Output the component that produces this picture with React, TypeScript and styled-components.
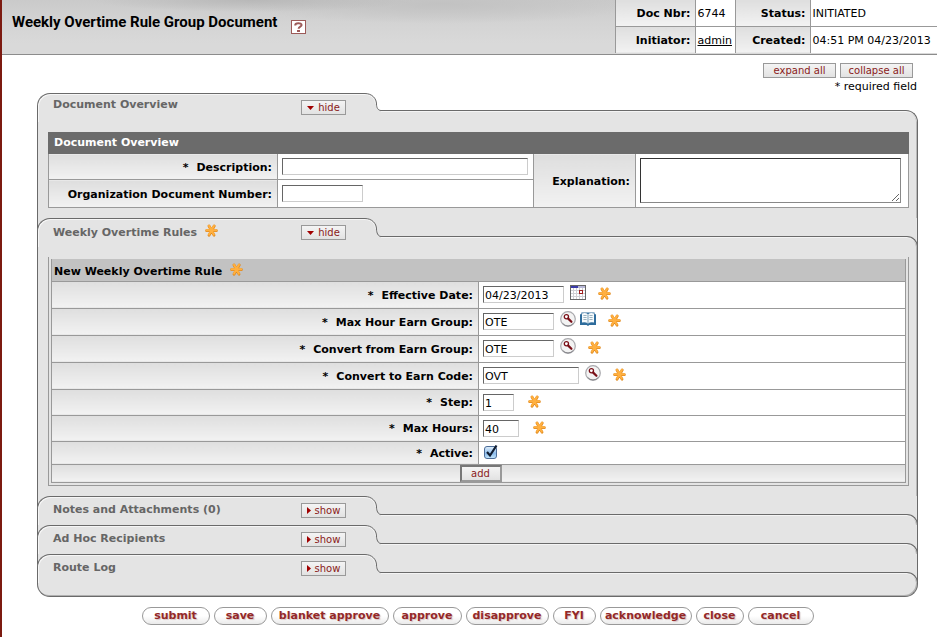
import React from "react";
import styled, { createGlobalStyle, css } from "styled-components";

const line = "#999";
const edge = "#6a6a6a";
const panel = "#e4e4e4";
const wine = "#8a1a1a";

const Global = createGlobalStyle`
  * { box-sizing: border-box; }
  body { margin: 0; background: #fff; color: #000; font: 11px/14px "DejaVu Sans", Verdana, sans-serif; }
  button, input, textarea { font: inherit; color: inherit; }
`;

const Page = styled.div`
  min-height: 100vh;
  border-left: 2px solid #7c1a10;
`;

const Header = styled.header`
  display: flex;
  justify-content: space-between;
  border-bottom: 1px solid #8c8c8c;
  background:
    radial-gradient(ellipse 160px 12px at 250px 0, #b8b8b8, transparent),
    radial-gradient(ellipse 200px 20px at 440px 4px, #c2c2c2, transparent),
    linear-gradient(#cacaca, #d3d3d3 40%, #d9d9d9 80%);
`;

const TitleBar = styled.div`
  display: flex;
  align-items: center;
  gap: 14px;
  padding: 0 0 10px 10px;
`;

const Title = styled.h1`
  margin: 0;
  font: bold 15px/20px "Arial Narrow", Roboto, sans-serif;
  white-space: nowrap;
`;

const HelpButton = styled.button`
  width: 15px;
  height: 14px;
  margin-top: 10px;
  padding: 0;
  border: 1px solid #9c5a58;
  background: #fff;
  svg { display: block; margin: 0 auto; }
`;

const labelFill = "linear-gradient(#dedede, #f2f2f2)";

const InfoTable = styled.table`
  border-collapse: collapse;
  background: #fff;
  margin-bottom: 1px;
  th, td { height: 27px; padding: 2px 2px 0; border-left: 1px solid ${line}; white-space: nowrap; }
  tr:first-child > * { height: 26px; }
  tr:last-child > * { border-top: 1px solid ${line}; }
  th { text-align: right; padding-right: 4px; background: ${labelFill}; }
  td:last-child { padding-right: 0; }
  a { color: #000; }
`;

const Tools = styled.div`
  display: flex;
  flex-direction: column;
  align-items: flex-end;
  margin: 8px 20px 0 0;
`;

const ToolRow = styled.div`
  display: flex;
  gap: 4px;
  margin-right: 4px;
`;

const SmallButton = styled.button<{ $w: number }>`
  display: flex;
  align-items: center;
  justify-content: center;
  gap: 4px;
  width: ${(p) => p.$w}px;
  height: 15px;
  padding: 0;
  border: 1px solid ${line};
  background: linear-gradient(#f4f4f4, #e2e2e2);
  color: ${wine};
  font-size: 10px;
  line-height: 13px;
`;

const Required = styled.div`
  margin-top: 3px;
  line-height: 12px;
`;

const Panels = styled.main`
  margin: 0 19px 0 35px;
`;

const Head = styled.div<{ $first?: boolean }>`
  display: grid;
  grid-template-columns: 328px 16px 1fr;
  ${(p) => !p.$first && css`
    background: ${panel};
    box-shadow: inset 1px 0 ${edge}, inset -1px 0 ${edge};
  `}
`;

const Tab = styled.div<{ $raised?: boolean }>`
  display: flex;
  align-items: flex-start;
  min-height: 29px;
  padding: ${(p) => (p.$raised ? "3px 0 0 15px" : "6px 0 0 15px")};
  border-top: 1px solid ${edge};
  border-left: 1px solid ${edge};
  border-top-left-radius: 13px;
  background: ${panel};
  box-shadow: inset 1px 1px #f6f6f6;
`;

const TabTitle = styled.h2`
  display: flex;
  align-items: center;
  gap: 8px;
  width: 248px;
  height: 15px;
  margin: 0;
  font: inherit;
  font-weight: bold;
  color: #666;
  svg { margin-bottom: 4px; }
`;

const TabAction = styled.div<{ $raised?: boolean }>`
  padding-top: ${(p) => (p.$raised ? "3px" : "0")};
`;

const Curve = styled.div`
  display: flex;
  flex-direction: column;
  svg { display: block; }
  &::after { content: ""; flex: 1; background: ${panel}; }
`;

const Shelf = styled.div<{ $drop: number }>`
  margin-top: ${(p) => p.$drop}px;
  border-top: 1px solid ${edge};
  border-right: 1px solid ${edge};
  border-top-right-radius: 13px;
  background: ${panel};
  box-shadow: inset 0 1px #f4f4f4, inset -1px 0 #b8b8b8;
`;

const Body = styled.div`
  padding: 10px 8px 10px 10px;
  border: solid ${edge};
  border-width: 0 1px;
  background: ${panel};
  box-shadow: inset -1px 0 #b8b8b8;
`;

const Foot = styled.div`
  height: 14px;
  border: 1px solid ${edge};
  border-top: 0;
  border-radius: 0 0 13px 13px;
  background: ${panel};
  box-shadow: inset -1px -1px #b0b0b0;
`;

const Grid = styled.table`
  width: 100%;
  border-collapse: collapse;
  table-layout: fixed;
  background: #fff;
  th, td { border: 1px solid ${line}; padding: 0 4px; text-align: left; }
`;

const Label = styled.th`
  && { text-align: right; padding: 2px 5px 0 0; background: ${labelFill}; }
`;

const DarkRow = styled.tr`
  && th { height: 21px; padding: 0 5px; background: #6b6b6b; border-color: #6b6b6b; color: #fff; }
`;

const SizedRow = styled.tr<{ $h: number }>`
  height: ${(p) => p.$h}px;
`;

const GrayRow = styled.tr`
  && th { height: 22px; padding: 0 2px; background: #c2c2c2; border-top: 0; }
`;

const Heading = styled.span`
  display: flex;
  align-items: center;
  gap: 8px;
  height: 18px;
  padding-top: 4px;
  svg { margin-bottom: 4px; }
`;

const RuleFrame = styled.div`
  padding: 2px;
  border: solid ${line};
  border-width: 0 1px 1px;
`;

const AddCell = styled.td`
  && { height: 18px; padding: 0 0 0 4px; background: ${labelFill}; }
`;

const AddButton = styled(SmallButton)`
  height: 17px;
  margin: 0 auto;
  border: 2px solid;
  border-color: #777 #999 #999 #777;
`;

const Star = styled.span`
  font-weight: bold;
  margin-right: 8px;
`;

const TextBox = styled.input<{ $w: number }>`
  display: block;
  width: ${(p) => p.$w}px;
  height: 17px;
  padding: 2px 1px 0;
  border: 1px solid;
  border-color: #666 #ccc #ccc #666;
  border-radius: 0;
  background: #fff;
`;

const Area = styled.textarea`
  display: block;
  width: 261px;
  max-width: 100%;
  height: 45px;
  border: 1px solid;
  border-color: #333 #888 #888 #333;
  border-radius: 0;
  background: #fff;
`;

const Field = styled.div`
  display: flex;
  align-items: center;
`;

const IconButton = styled.button<{ $gap: number }>`
  width: 16px;
  height: 16px;
  margin: 0 0 5px ${(p) => p.$gap}px;
  padding: 0;
  border: 0;
  background: none;
  svg { display: block; }
`;

const Mark = styled.span<{ $gap: number }>`
  display: flex;
  margin: 0 0 2px ${(p) => p.$gap}px;
`;

const CheckWrap = styled.span`
  position: relative;
  display: block;
  width: 13px;
  height: 13px;
  margin-left: 1px;
  svg { position: absolute; left: 0; bottom: 0; pointer-events: none; opacity: 0; }
  input:checked + svg { opacity: 1; }
`;

const Check = styled.input`
  appearance: none;
  display: block;
  width: 13px;
  height: 13px;
  margin: 0;
  border: 1px solid #4c6c98;
  border-radius: 3px;
  background: linear-gradient(#dcecfa, #8cbcec 60%, #c0e4fc);
`;

const Actions = styled.div`
  display: flex;
  flex-wrap: wrap;
  justify-content: center;
  gap: 4px;
  padding: 10px 0;
`;

const Pill = styled.button<{ $w: number }>`
  width: ${(p) => p.$w}px;
  height: 18px;
  padding: 0;
  border: 1px solid ${line};
  border-radius: 9px;
  background: linear-gradient(#fff 50%, #eaeaea);
  color: #942828;
  font-weight: bold;
  line-height: 15px;
  text-shadow: 1px 1px 1px #d8c4c4;
  white-space: nowrap;
`;

const Asterisk = () => (
  <svg width="13" height="13" viewBox="0 0 13 13" aria-hidden="true">
    <path d="M1.6 6.7H11.4M4 2L9 11.2M9.2 2L4 11.2" stroke="#e08a20" strokeWidth="2.8" strokeLinecap="round" />
    <path d="M1.6 6.3H11.2M4 1.8L8.8 10.6M9 1.8L4.1 10.6" stroke="#ffb040" strokeWidth="2" strokeLinecap="round" />
  </svg>
);

const Lens = () => (
  <svg width="16" height="16" viewBox="0 0 16 16" aria-hidden="true">
    <circle cx="8" cy="8" r="7.3" fill="#f3f3f3" stroke="#a9a9ad" strokeWidth="1.2" />
    <path d="M2.6 12.4A7 7 0 0 0 13.4 12.4" fill="none" stroke="#85858a" strokeWidth="1" />
    <circle cx="6.4" cy="5.8" r="2.1" fill="#fff" stroke="#7a1018" strokeWidth="1.3" />
    <path d="M8.2 7.6L11.4 10.8" stroke="#7a1018" strokeWidth="2.2" strokeLinecap="round" />
  </svg>
);

const Book = () => (
  <svg width="16" height="16" viewBox="0 0 16 16" aria-hidden="true">
    <path d="M0 3.2H1.4V1.6H14.6V3.2H16V14H9.4L8 15L6.6 14H0Z" fill="#2e6c9c" />
    <path d="M2 2.4Q5.6 1.2 8 3.2Q10.4 1.2 14 2.4V11.4Q10.4 10.6 8 12.4Q5.6 10.6 2 11.4Z" fill="#f6fafc" />
    <path d="M8 3.2V12.4" stroke="#7aa0b8" />
    <path d="M3.4 4.5H6.6M3.4 6.5H6.6M3.4 8.5H6.6M9.4 4.5H12.6M9.4 6.5H12.6M9.4 8.5H12.6" stroke="#9cb4c0" />
  </svg>
);

const Calendar = () => (
  <svg width="16" height="15" viewBox="0 0 16 15" shapeRendering="crispEdges" aria-hidden="true">
    <rect x="0" y="0" width="16" height="15" fill="#666" />
    <rect x="1" y="1" width="14" height="13" fill="#fff" />
    <path d="M1 5.5H15M1 8.5H15M1 11.5H15M3.5 3V14M6.5 3V14M9.5 3V14M12.5 3V14" stroke="#d0d0d4" />
    <rect x="1" y="1" width="7" height="2" fill="#3a3aa8" />
    <rect x="8" y="1" width="7" height="2" fill="#b8b8d8" />
    <rect x="9.5" y="5.5" width="3" height="3" fill="#fff" stroke="#a02020" />
  </svg>
);

const Down = () => (
  <svg width="7" height="4" viewBox="0 0 7 4" aria-hidden="true"><path d="M0 0H7L3.5 4Z" fill="#a00000" /></svg>
);

const Right = () => (
  <svg width="4" height="7" viewBox="0 0 4 7" aria-hidden="true"><path d="M0 0V7L4 3.5Z" fill="#a00000" /></svg>
);

const CurveSvg = ({ drop }: { drop: number }) => {
  const end = drop + 0.5;
  const path = `M0 0.5C7 0.5 11.5 5.5 11.5 11C11.5 14.5 13 ${end} 16 ${end}`;
  return (
    <svg width="16" height={drop + 1} viewBox={`0 0 16 ${drop + 1}`} aria-hidden="true">
      <path d={`${path}V${drop + 1}H0Z`} fill={panel} />
      <path d="M0 1.5C6 1.5 10.5 6 10.5 11" fill="none" stroke="#f6f6f6" />
      <path d={path} fill="none" stroke={edge} />
    </svg>
  );
};

type PanelProps = { title: string; open?: boolean; first?: boolean; marked?: boolean; children?: React.ReactNode };

const Panel = ({ title, open, first, marked, children }: PanelProps) => {
  const drop = first ? 17 : 18;
  return (
    <section>
      <Head $first={first}>
        <Tab $raised={first}>
          <TabTitle>{title}{marked && <Asterisk />}</TabTitle>
          <TabAction $raised={first}>
            <SmallButton $w={45} type="button">{open ? <Down /> : <Right />}{open ? "hide" : "show"}</SmallButton>
          </TabAction>
        </Tab>
        <Curve><CurveSvg drop={drop} /></Curve>
        <Shelf $drop={drop} />
      </Head>
      {children && <Body>{children}</Body>}
    </section>
  );
};

type Rule = { label: string; id: string; w: number; value: string; h: number; icons: ("calendar" | "lens" | "book")[]; gap: number };

const rules: Rule[] = [
  { label: "Effective Date:", id: "date", w: 81, value: "04/23/2013", h: 27, icons: ["calendar"], gap: 12 },
  { label: "Max Hour Earn Group:", id: "maxGroup", w: 71, value: "OTE", h: 27, icons: ["lens", "book"], gap: 12 },
  { label: "Convert from Earn Group:", id: "fromGroup", w: 71, value: "OTE", h: 27, icons: ["lens"], gap: 12 },
  { label: "Convert to Earn Code:", id: "toCode", w: 96, value: "OVT", h: 27, icons: ["lens"], gap: 12 },
  { label: "Step:", id: "step", w: 31, value: "1", h: 26, icons: [], gap: 14 },
  { label: "Max Hours:", id: "maxHours", w: 36, value: "40", h: 26, icons: [], gap: 14 },
];

const glyphs = { calendar: <Calendar />, lens: <Lens />, book: <Book /> };
const glyphNames = { calendar: "Pick date", lens: "Search", book: "Direct inquiry" };

const actions: [string, number][] = [
  ["submit", 68], ["save", 53], ["blanket approve", 118], ["approve", 69], ["disapprove", 83],
  ["FYI", 43], ["acknowledge", 92], ["close", 48], ["cancel", 66],
];

export default function App() {
  return (
    <Page>
      <Global />
      <Header>
        <TitleBar>
          <Title>Weekly Overtime Rule Group Document</Title>
          <HelpButton type="button" aria-label="Help">
            <svg width="9" height="10" viewBox="0 0 9 10" aria-hidden="true">
              <path d="M1.2 3.4C1.2 0.6 7.6 0.6 7.6 3C7.6 4.8 4.6 4.4 4.6 6.8" fill="none" stroke="#9c5a58" strokeWidth="2" />
              <rect x="3" y="8" width="3" height="2" fill="#9c5a58" />
            </svg>
          </HelpButton>
        </TitleBar>
        <InfoTable>
          <colgroup><col width="80" /><col width="40" /><col width="75" /><col width="127" /></colgroup>
          <tbody>
            <tr><th scope="row">Doc Nbr:</th><td>6744</td><th scope="row">Status:</th><td>INITIATED</td></tr>
            <tr><th scope="row">Initiator:</th><td><a href="#admin">admin</a></td><th scope="row">Created:</th><td>04:51 PM 04/23/2013</td></tr>
          </tbody>
        </InfoTable>
      </Header>
      <Tools>
        <ToolRow>
          <SmallButton $w={73} type="button">expand all</SmallButton>
          <SmallButton $w={73} type="button">collapse all</SmallButton>
        </ToolRow>
        <Required>* required field</Required>
      </Tools>
      <Panels>
        <Panel title="Document Overview" open first>
          <Grid>
            <colgroup><col width="229" /><col width="256" /><col width="102" /><col /></colgroup>
            <thead><DarkRow><th colSpan={4}>Document Overview</th></DarkRow></thead>
            <tbody>
              <SizedRow $h={26}>
                <Label scope="row"><Star>*</Star><label htmlFor="description">Description:</label></Label>
                <td><TextBox id="description" $w={246} /></td>
                <Label scope="row" rowSpan={2}><label htmlFor="explanation">Explanation:</label></Label>
                <td rowSpan={2}><Area id="explanation" /></td>
              </SizedRow>
              <SizedRow $h={28}>
                <Label scope="row"><label htmlFor="orgNumber">Organization Document Number:</label></Label>
                <td><TextBox id="orgNumber" $w={81} /></td>
              </SizedRow>
            </tbody>
          </Grid>
        </Panel>
        <Panel title="Weekly Overtime Rules" open marked>
          <RuleFrame>
            <Grid>
              <colgroup><col width="50%" /><col width="50%" /></colgroup>
              <thead><GrayRow><th colSpan={2}><Heading>New Weekly Overtime Rule<Asterisk /></Heading></th></GrayRow></thead>
              <tbody>
                {rules.map((r) => (
                  <SizedRow $h={r.h} key={r.id}>
                    <Label scope="row"><Star>*</Star><label htmlFor={r.id}>{r.label}</label></Label>
                    <td>
                      <Field>
                        <TextBox id={r.id} $w={r.w} defaultValue={r.value} />
                        {r.icons.map((n, i) => (
                          <IconButton key={n} $gap={i ? 4 : 6} type="button" aria-label={glyphNames[n]}>{glyphs[n]}</IconButton>
                        ))}
                        <Mark $gap={r.gap}><Asterisk /></Mark>
                      </Field>
                    </td>
                  </SizedRow>
                ))}
                <SizedRow $h={23}>
                  <Label scope="row"><Star>*</Star><label htmlFor="active">Active:</label></Label>
                  <td>
                    <CheckWrap>
                      <Check id="active" type="checkbox" defaultChecked />
                      <svg width="14" height="15" viewBox="0 0 14 15" aria-hidden="true">
                        <path d="M3 8L6 11.5L12.5 1.5" fill="none" stroke="#101c30" strokeWidth="2.2" />
                      </svg>
                    </CheckWrap>
                  </td>
                </SizedRow>
                <tr><AddCell colSpan={2}><AddButton $w={42} type="button">add</AddButton></AddCell></tr>
              </tbody>
            </Grid>
          </RuleFrame>
        </Panel>
        <Panel title="Notes and Attachments (0)" />
        <Panel title="Ad Hoc Recipients" />
        <Panel title="Route Log" />
        <Foot />
        <Actions>
          {actions.map(([name, w]) => <Pill key={name} $w={w} type="button">{name}</Pill>)}
        </Actions>
      </Panels>
    </Page>
  );
}
